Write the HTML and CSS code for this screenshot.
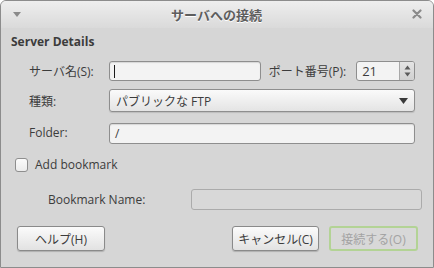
FILE: index.html
```html
<!DOCTYPE html>
<html lang="ja">

<head>
    <meta charset="UTF-8">
    <meta name="viewport" content="width=device-width, initial-scale=1.0">
    <title>サーバへの接続</title>
    <link rel="stylesheet" href="styles.css">
</head>

<body>
    <div class="window">
        <div class="titlebar">
            <span class="menu-arrow"></span>
            <span class="title">サーバへの接続</span>
            <svg class="close" width="10" height="10" viewBox="0 0 10 10">
                <path d="M1.5 1.5 L8.5 8.5 M8.5 1.5 L1.5 8.5" stroke="#8a8a8a" stroke-width="2.2" stroke-linecap="round" />
            </svg>
        </div>

        <div class="content">
            <h2 class="section-title">Server Details</h2>

            <div class="form">
                <label class="label">サーバ名(S):</label>
                <div class="row-server">
                    <div class="entry entry-server"><span class="cursor"></span></div>
                    <label class="label port-label">ポート番号(P):</label>
                    <div class="spin">
                        <span class="spin-value">21</span>
                        <span class="spin-buttons">
                            <svg width="7" height="14" viewBox="0 0 7 14">
                                <path d="M0.5 5.5 L3.5 1.5 L6.5 5.5 Z" fill="#5a5a5a" />
                                <path d="M0.5 8.5 L3.5 12.5 L6.5 8.5 Z" fill="#5a5a5a" />
                            </svg>
                        </span>
                    </div>
                </div>

                <label class="label">種類:</label>
                <div class="combo">
                    <span>パブリックな FTP</span>
                    <svg width="9" height="6" viewBox="0 0 9 6">
                        <path d="M0 0 L9 0 L4.5 6 Z" fill="#3a3a3a" />
                    </svg>
                </div>

                <label class="label">Folder:</label>
                <div class="entry entry-folder">/</div>
            </div>

            <div class="check-row">
                <span class="checkbox"></span>
                <span>Add bookmark</span>
            </div>

            <div class="bookmark-row">
                <label class="label">Bookmark Name:</label>
                <div class="entry entry-disabled"></div>
            </div>

            <div class="buttons">
                <button class="btn btn-help">ヘルプ(H)</button>
                <span class="spacer"></span>
                <button class="btn btn-cancel">キャンセル(C)</button>
                <button class="btn btn-connect">接続する(O)</button>
            </div>
        </div>
    </div>
</body>

</html>
```

FILE: styles.css
```css
:root {
    --bg-color: #d6d6d6;
    --text-color: #3c3c3c;
    --border-color: #8e8e8e;
}

body {
    margin: 0;
    font-family: "Open Sans", "Noto Sans CJK JP", sans-serif;
    font-size: 12px;
    color: var(--text-color);
}

.window {
    width: 434px;
    height: 268px;
    box-sizing: border-box;
    border: 1px solid #8c8c8c;
    border-radius: 6px 6px 0 0;
    background-color: var(--bg-color);
    overflow: hidden;
    display: flex;
    flex-direction: column;
}

.titlebar {
    height: 27px;
    flex: none;
    display: flex;
    align-items: center;
    background: linear-gradient(#eeeeee, #dadada);
    padding: 0 11px 0 12px;
}

.menu-arrow {
    width: 0;
    height: 0;
    border-left: 4px solid transparent;
    border-right: 4px solid transparent;
    border-top: 5px solid #8a8a8a;
    margin-top: -1px;
}

.title {
    flex: 1;
    text-align: center;
    font-weight: bold;
    font-size: 13px;
    color: #5e5e5e;
    text-shadow: 0 1px 0 #ffffff;
    margin-top: -1px;
}

.close {
    margin-top: -1px;
}

.content {
    flex: 1;
    display: flex;
    flex-direction: column;
    padding: 5px 0 0 10px;
}

.section-title {
    margin: 0;
    font-size: 12px;
    font-weight: bold;
    line-height: 17px;
}

.form {
    display: grid;
    grid-template-columns: 68px 306px;
    column-gap: 12px;
    row-gap: 8px;
    align-items: center;
    margin: 11px 0 0 18px;
}

.label {
    white-space: nowrap;
}

.row-server {
    display: flex;
    align-items: center;
}

.entry {
    box-sizing: border-box;
    height: 20px;
    border: 1px solid var(--border-color);
    border-radius: 3px;
    background-color: #f3f3f3;
    box-shadow: inset 0 1px 1px rgba(0, 0, 0, 0.12);
    padding: 0 5px;
    line-height: 18px;
    display: flex;
    align-items: center;
}

.entry-server {
    width: 157px;
}

.cursor {
    width: 1px;
    height: 13px;
    background-color: #1a1a1a;
    margin-left: -1px;
}

.port-label {
    margin: 0 10px 0 8px;
}

.spin {
    box-sizing: border-box;
    width: 61px;
    height: 20px;
    display: flex;
    border: 1px solid var(--border-color);
    border-radius: 3px;
    background-color: #f3f3f3;
    overflow: hidden;
}

.spin-value {
    flex: 1;
    padding-left: 5px;
    line-height: 18px;
    font-size: 13px;
}

.spin-buttons {
    width: 14px;
    display: flex;
    align-items: center;
    justify-content: center;
    border-left: 1px solid #a8a8a8;
    background: linear-gradient(#e4e4e4, #d0d0d0);
}

.combo {
    box-sizing: border-box;
    height: 23px;
    display: flex;
    align-items: center;
    justify-content: space-between;
    border: 1px solid var(--border-color);
    border-radius: 3px;
    background: linear-gradient(#fafafa, #e4e4e4);
    box-shadow: 0 1px 1px rgba(0, 0, 0, 0.12);
    padding: 0 6px 0 6px;
}

.entry-folder {
    height: 21px;
    margin-top: 3px;
}

.check-row {
    display: flex;
    align-items: center;
    gap: 7px;
    margin: 12px 0 0 4px;
}

.checkbox {
    box-sizing: border-box;
    width: 13px;
    height: 14px;
    border: 1px solid var(--border-color);
    border-radius: 3px;
    background: linear-gradient(#fbfbfb, #ececec);
}

.bookmark-row {
    display: flex;
    align-items: center;
    margin: 16px 0 0 37px;
}

.bookmark-row .label {
    width: 143px;
}

.entry-disabled {
    width: 231px;
    height: 21px;
    border-color: #ababab;
    background-color: #d8d8d8;
    box-shadow: none;
}

.buttons {
    display: flex;
    gap: 10px;
    margin: 16px 0 0 6px;
    width: 401px;
}

.spacer {
    flex: 1;
}

.btn {
    box-sizing: border-box;
    height: 25px;
    font-family: inherit;
    font-size: 12px;
    color: var(--text-color);
    border: 1px solid #8a8a8a;
    border-radius: 3px;
    background: linear-gradient(#fbfbfb, #e2e2e2);
    box-shadow: 0 1px 1px rgba(0, 0, 0, 0.18);
    padding: 0;
}

.btn-help {
    width: 88px;
}

.btn-cancel {
    width: 87px;
}

.btn-connect {
    width: 89px;
    color: #a3a3a3;
    border: 2px solid #b3d395;
    background: #d8d8d8;
    box-shadow: none;
}
```
